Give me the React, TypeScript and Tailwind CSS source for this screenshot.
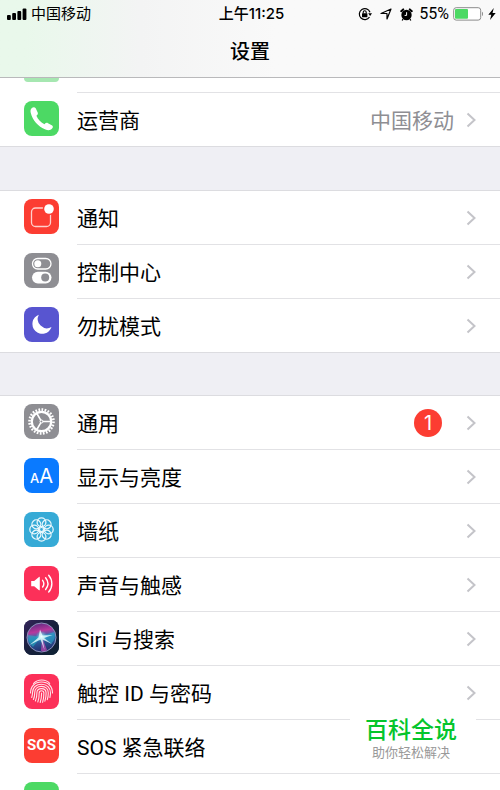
import type { ReactNode } from "react";

type Item = {
  label: string;
  tile: string;
  icon: ReactNode;
  value?: string;
  badge?: number;
};

const Glyph = ({ children }: { children: ReactNode }) => (
  <svg viewBox="0 0 35 35" className="h-full w-full" fill="none" aria-hidden="true">
    {children}
  </svg>
);

const PhoneIcon = () => (
  <Glyph>
    <path
      fill="#fff"
      d="M7.600 7.200C9 5.900 10.900 5.900 11.700 7.300l2 4.300c.5 1.300 0 2.200-1.300 3.200 1.600 3.700 4.600 6.800 8.100 8.400 1.200-1.300 2.200-1.700 3.500-1l4.200 2.400c1 .8.9 1.900-.1 3-1.500 1.700-3.800 2.200-6.600 1C14 25.500 8.300 18.700 6.800 12 6.300 10 6.400 8.400 7.600 7.200z"
    />
  </Glyph>
);

const NotificationIcon = () => (
  <Glyph>
    <rect x="7.5" y="9" width="19" height="18.5" rx="4" stroke="#ffd0cc" strokeWidth="1.3" />
    <circle cx="25" cy="10" r="6.2" fill="#fc3d32" />
    <circle cx="25" cy="10" r="4.8" fill="#fff" />
  </Glyph>
);

const ControlIcon = () => (
  <Glyph>
    <rect x="8.5" y="5.5" width="18.5" height="10.5" rx="5.2" stroke="#fff" strokeWidth="1.3" />
    <circle cx="13.8" cy="10.8" r="3.5" fill="#fff" />
    <rect x="8" y="18.8" width="19.5" height="11.6" rx="5.8" fill="#fff" />
    <circle cx="21.2" cy="24.6" r="4" fill="#8e8e93" />
  </Glyph>
);

const MoonIcon = () => (
  <Glyph>
    <path fill="#fff" d="M14.8 7.8A9.8 9.8 0 1 0 27.5 20 9.2 9.2 0 0 1 14.8 7.8z" />
  </Glyph>
);

const GearIcon = () => (
  <Glyph>
    <circle cx="17.5" cy="17.5" r="12" stroke="#fff" strokeWidth="2.6" pathLength="48" strokeDasharray="1.1 0.9" />
    <circle cx="17.5" cy="17.5" r="9.7" stroke="#fff" strokeWidth="2.2" />
    <path d="M18.5 17.5H27M17 16.6 12.6 9M17 18.4 12.6 26" stroke="#fff" strokeWidth="1.6" />
    <circle cx="17.5" cy="17.5" r="1.5" stroke="#fff" strokeWidth="1" />
  </Glyph>
);

const DisplayIcon = () => (
  <span className="flex h-full items-baseline justify-center pt-1.5 font-[Inter,sans-serif] leading-6 text-white" aria-hidden="true">
    <span className="text-[13px] font-medium">A</span>
    <span className="text-[20px]">A</span>
  </span>
);

const WallpaperIcon = () => (
  <Glyph>
    {[0, 45, 90, 135, 180, 225, 270, 315].map((angle) => (
      <circle
        key={angle}
        cx="17.5"
        cy="10.2"
        r="4.4"
        stroke="#e9f7fc"
        strokeWidth="1.3"
        transform={`rotate(${angle} 17.5 17.5)`}
      />
    ))}
    <circle cx="17.5" cy="17.5" r="2" stroke="#e9f7fc" strokeWidth="1.2" />
  </Glyph>
);

const SoundIcon = () => (
  <Glyph>
    <path fill="#fff" d="M7.2 15h3l4.800-4c.4-.3.8-.1.8.4v12.400c0 .5-.4.7-.8.4l-4.800-4h-3z" />
    <path
      d="M18.6 14.3c1.500 2 1.500 4.700 0 6.700M21.600 11.800c2.900 3.600 2.900 8.100 0 11.700M24.700 9.300c4.200 5 4.200 11.700 0 16.700"
      stroke="#fff"
      strokeWidth="1.4"
      strokeLinecap="round"
    />
  </Glyph>
);

const SiriIcon = () => (
  <Glyph>
    <defs>
      <linearGradient id="siriOrb" x1="0.3" y1="0" x2="0.5" y2="1">
        <stop offset="0" stopColor="#5b2a80" />
        <stop offset="0.3" stopColor="#b8389d" />
        <stop offset="0.5" stopColor="#2c6fb0" />
        <stop offset="1" stopColor="#232a68" />
      </linearGradient>
      <radialGradient id="siriGlow">
        <stop offset="0" stopColor="#fff" />
        <stop offset="0.35" stopColor="#9ff4f4" stopOpacity="0.6" />
        <stop offset="1" stopColor="#35c7d8" stopOpacity="0" />
      </radialGradient>
      <linearGradient id="siriTile" x1="0" y1="0" x2="1" y2="1">
        <stop offset="0" stopColor="#34245a" />
        <stop offset="0.5" stopColor="#17203c" />
        <stop offset="1" stopColor="#0d2233" />
      </linearGradient>
    </defs>
    <rect width="35" height="35" fill="url(#siriTile)" />
    <circle cx="17.5" cy="17.5" r="14.5" fill="url(#siriOrb)" stroke="#8d93bd" strokeWidth="1" />
    <path d="M17 17 4 15c0 6 2 9 5 12z" fill="#22b9c8" opacity="0.5" />
    <path d="M18 16 30 12c2 5 0 9-3 12z" fill="#2bb8d4" opacity="0.5" />
    <path d="M18 17 17 31c3 1 5 0 6-1z" fill="#d84fc0" opacity="0.6" />
    <circle cx="17.5" cy="16.5" r="6" fill="url(#siriGlow)" />
    <path
      d="M16 9.500 18.500 15.500 28.500 15 20 18 28 24 18.500 19.500 20.500 30 16.500 19.500 5.500 25 14.500 17.500z"
      fill="#e8ffff"
      opacity="0.8"
    />
  </Glyph>
);

const TouchIdIcon = () => (
  <Glyph>
    <g stroke="#ffe3e9" strokeWidth="1.1" strokeLinecap="round">
      <path d="M9.500 9.500c4.300-4.700 12.200-4.700 16.200-.2" />
      <path d="M6.500 19c0-6.700 4.400-11 11-11s11 4.300 11 11" />
      <path d="M7.700 23.500c.8-2 .8-3.400.8-5 0-5 3.700-8.300 9-8.300s9 3.600 9 8.800c0 1.700-.2 3-.6 4.500" />
      <path d="M9.400 25.500c1.200-2.600 1.300-4.600 1.300-6.800 0-3.800 2.700-6.300 6.800-6.300s6.800 2.700 6.800 6.600c0 2.500-.3 4.600-1 6.700" />
      <path d="M11.400 27c1.300-2.900 1.500-5.400 1.500-8.200 0-2.600 1.800-4.200 4.600-4.200s4.600 1.800 4.600 4.400c0 3.200-.5 5.800-1.200 8.200" />
      <path d="M13.800 28c1.200-3.200 1.400-6 1.400-9 0-1.500.9-2.300 2.300-2.300s2.400.9 2.400 2.400c0 3.500-.5 6.500-1.300 9.200" />
      <path d="M17.600 19c0 3.500-.4 6.500-1.400 9.500" />
    </g>
  </Glyph>
);

const SosIcon = () => (
  <span
    className="flex h-full items-center justify-center text-[15px] font-bold text-white"
    aria-hidden="true"
  >
    SOS
  </span>
);

const groups: Item[][] = [
  [{ label: "运营商", tile: "bg-[#4cd964]", icon: <PhoneIcon />, value: "中国移动" }],
  [
    { label: "通知", tile: "bg-[#fc3d32]", icon: <NotificationIcon /> },
    { label: "控制中心", tile: "bg-[#8e8e93]", icon: <ControlIcon /> },
    { label: "勿扰模式", tile: "bg-[#5855d0]", icon: <MoonIcon /> },
  ],
  [
    { label: "通用", tile: "bg-[#8e8e93]", icon: <GearIcon />, badge: 1 },
    { label: "显示与亮度", tile: "bg-[#0a7aff]", icon: <DisplayIcon /> },
    { label: "墙纸", tile: "bg-[#36aad6]", icon: <WallpaperIcon /> },
    { label: "声音与触感", tile: "bg-[#fc3059]", icon: <SoundIcon /> },
    { label: "Siri 与搜索", tile: "bg-[#17203c]", icon: <SiriIcon /> },
    { label: "触控 ID 与密码", tile: "bg-[#fc3059]", icon: <TouchIdIcon /> },
    { label: "SOS 紧急联络", tile: "bg-[#fc3d32]", icon: <SosIcon /> },
    { label: "", tile: "bg-[#4cd964]", icon: null },
  ],
];

const groupTops = ["", "mt-[43px] border-t border-[#dcdce0]", "mt-[42px] border-t border-[#dcdce0]"];

const Chevron = () => (
  <svg viewBox="0 0 10 16" className="h-4 w-[10px] shrink-0" fill="none" aria-hidden="true">
    <path d="M1.5 1.5 8.5 8l-7 6.500" stroke="#c4c4c9" strokeWidth="2" />
  </svg>
);

const Row = ({ item, last }: { item: Item; last: boolean }) => (
  <li className={last ? "border-b border-[#dcdce0]" : ""}>
    <a href="#" className="flex items-stretch pl-6">
      <span className={`mt-2 size-[35px] shrink-0 overflow-hidden rounded-lg ${item.tile}`}>{item.icon}</span>
      <span
        className={`ml-[18px] flex flex-1 items-center pr-6 text-[21px] leading-6 ${
          last ? "h-[53px]" : "h-[54px] border-b border-[#e2e2e5]"
        }`}
      >
        <span className="flex-1 pt-0.5">{item.label}</span>
        {item.value && <span className="mr-3 pt-0.5 text-[#8e8e93]">{item.value}</span>}
        {item.badge && (
          <span className="mr-6 flex size-7 items-center justify-center rounded-full bg-[#fc3d32] font-[Inter,sans-serif] text-xl text-white">
            {item.badge}
          </span>
        )}
        <Chevron />
      </span>
    </a>
  </li>
);

const StatusBar = () => (
  <div className="grid grid-cols-[1fr_auto_1fr] items-center pt-0.5 pr-1 pl-[7px] text-[15px] leading-6">
    <div className="flex items-center gap-1">
      <svg viewBox="0 0 20 12" className="h-3 w-5" aria-hidden="true">
        <rect x="0" y="7" width="3.8" height="5" rx="1" />
        <rect x="5.2" y="5" width="3.8" height="7" rx="1" />
        <rect x="10.4" y="3" width="3.8" height="9" rx="1" />
        <rect x="15.6" y="0.5" width="3.8" height="11.5" rx="1" />
      </svg>
      <span>中国移动</span>
    </div>
    <span className="font-[Inter,'Noto_Sans_CJK_SC',sans-serif] font-medium">上午11:25</span>
    <div className="flex items-center justify-end">
      <svg viewBox="0 0 14 14" className="mr-2 size-[14px]" fill="none" stroke="#000" aria-hidden="true">
        <path d="M11.500 10A5.500 5.500 0 1 1 12 5.200" strokeWidth="1.2" />
        <path d="M10.200 6.200h3.800l-1.900 2.800z" fill="#000" stroke="none" />
        <rect x="4" y="6.200" width="5.4" height="4" rx="0.5" fill="#000" stroke="none" />
        <path d="M5.200 6.500V5.200a1.500 1.500 0 0 1 3 0v1.300" strokeWidth="1.1" />
      </svg>
      <svg viewBox="0 0 12 12" className="mr-2 size-3" fill="none" aria-hidden="true">
        <path d="M11 1 7 11V5.500H1z" stroke="#000" strokeWidth="1.2" strokeLinejoin="round" />
      </svg>
      <svg viewBox="0 0 13 13" className="mr-1.5 size-[13px]" fill="none" aria-hidden="true">
        <circle cx="6.5" cy="7" r="5.2" fill="#000" />
        <path d="M1.200 3.200 3.200 1.400M11.800 3.200 9.800 1.400" stroke="#000" strokeWidth="2" strokeLinecap="round" />
        <path d="M3 11.200 2.200 12.500M10 11.200l.8 1.300" stroke="#000" strokeWidth="1.3" />
        <path d="M6.600 4.200v3.200H4.600" stroke="#fff" strokeWidth="1" />
      </svg>
      <span className="mr-1 text-base leading-6">55%</span>
      <svg viewBox="0 0 31 14" className="mr-1 h-[14px] w-[31px]" fill="none" aria-hidden="true">
        <rect x="0.7" y="0.7" width="27" height="12.4" rx="2.5" fill="#fff" stroke="#8a8a8a" strokeWidth="1" />
        <rect x="2" y="2" width="13" height="9.8" rx="1" fill="#4cd964" />
        <path d="M29 4.800c1.300.4 1.300 3.800 0 4.200z" fill="#8a8a8a" />
      </svg>
      <svg viewBox="0 0 8 12" className="h-3 w-2" aria-hidden="true">
        <path d="M5.800 0 .3 6.800h3L2 12l5.700-7H4.500z" />
      </svg>
    </div>
  </div>
);

export default function App() {
  return (
    <div className="relative flex h-screen flex-col overflow-hidden bg-[#efeff4] font-[Roboto,'Noto_Sans_CJK_SC',sans-serif] text-black">
      <header className="shrink-0 border-b border-[#b9b9bb] bg-linear-to-r from-[#e9f8eb] from-5% via-[#f3f4f4] via-28% to-[#f9f9f9] to-55%">
        <StatusBar />
        <h1 className="pt-[14px] pb-[13px] text-center text-xl leading-6 font-medium">设置</h1>
      </header>
      <main className="min-h-0 flex-1 overflow-hidden">
        <div className="bg-white pl-6">
          <div className="h-[15px]">
            <div className="h-1 w-[35px] rounded-b-lg bg-[#a6e7b1]" />
          </div>
        </div>
        {groups.map((items, g) => (
          <ul key={g} className={`bg-white ${groupTops[g]}`}>
            {g === 0 && <li className="-mt-px ml-[77px] border-b border-[#e2e2e5]" aria-hidden="true" />}
            {items.map((item) => (
              <Row key={item.label} item={item} last={item === items[items.length - 1]} />
            ))}
          </ul>
        ))}
      </main>
      <aside className="absolute right-6 bottom-[25px] w-[126px] bg-white pt-1 pr-1 text-center">
        <p className="text-[23px] leading-7 font-medium text-[#05c52c]">百科全说</p>
        <p className="pb-1 text-[13px] leading-4 text-[#999]">助你轻松解决</p>
      </aside>
    </div>
  );
}
